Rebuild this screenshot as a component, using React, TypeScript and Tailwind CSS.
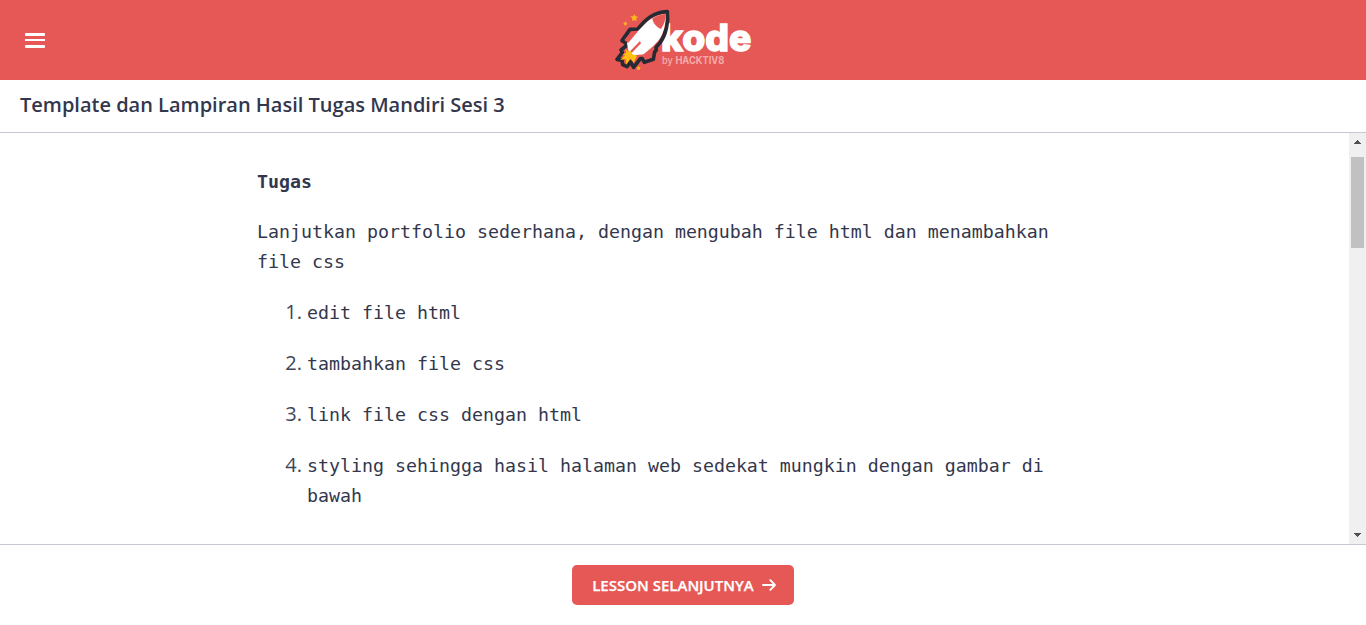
const steps = [
  'edit file html',
  'tambahkan file css',
  'link file css dengan html',
  'styling sehingga hasil halaman web sedekat mungkin dengan gambar di bawah',
];

function Logo() {
  return (
    <svg width="156" height="80" viewBox="0 0 468 240" role="img" aria-label="Kode by Hacktiv8">
      <text x="168" y="154" textLength="271" lengthAdjust="spacingAndGlyphs" fill="#fff" stroke="#fff" strokeWidth="4" className="font-['Inter'] text-[109px] font-extrabold">kode</text>
      <text x="171" y="193" textLength="187" lengthAdjust="spacingAndGlyphs" fill="#f3acab" className="font-['Inter'] text-[30px]">
        <tspan className="font-medium">by </tspan>
        <tspan className="font-bold">HACKTIV8</tspan>
      </text>
      <path d="M187 35C162 34 134 48 117 66L98 87L75 88L51 122L64 130L63 138L48 150L52 158L36 178L51 181L53 194L66 200L77 186L86 202L106 176L112 176L118 187L145 178L149 156L154 150L153 142L166 127C183 103 191 65 187 35Z" fill="#e65856" stroke="#262b33" strokeWidth="11" strokeLinejoin="round" />
      <path d="M181 41C155 45 132 58 117 75L94 98L66 129L70 152L84 166L122 163L141 142L159 123C175 104 184 71 181 41Z" fill="#fff" />
      <path d="M181 41C164 44 150 49 142 56C145 70 153 80 168 87C178 72 183 56 181 41Z" fill="#e65856" />
      <path d="M98 95L79 96L58 120L70 128ZM142 141L112 166L121 178L139 172Z" fill="#e65856" />
      <path d="M105 123L75 154L80 159L108 130Z" fill="#e65856" />
      <path d="M61 146L70 155L77 152L82 163L96 167L86 188L76 175L64 194L62 177L46 180L61 166L52 164L64 158Z" fill="#fec20e" />
      <path d="M88 41L91 49L99 50L93 56L95 64L88 60L81 63L82 55L76 49L85 49ZM61 63L63 68L68 69L64 72L65 77L61 74L57 77L58 72L54 69L59 68ZM101 197L103 202L108 203L104 206L105 211L100 208L96 211L97 205L93 202L99 202Z" fill="#fbb91b" />
    </svg>
  );
}

export default function App() {
  return (
    <div className="flex h-[625px] w-full flex-col overflow-hidden bg-white font-['Open_Sans',sans-serif] text-[#33374d]">
      <header className="grid h-20 shrink-0 grid-cols-[1fr_156px_1fr] items-center bg-[#e65856]">
        <button aria-label="Menu" className="ml-[25px] flex w-5 flex-col gap-[3px] pt-px">
          <span className="h-[3px] w-5 rounded-[1px] bg-white" />
          <span className="mb-px h-[2px] w-5 bg-white" />
          <span className="h-[3px] w-5 rounded-[1px] bg-white" />
        </button>
        <Logo />
      </header>
      <div className="flex h-[53px] shrink-0 items-center border-b border-[#c8c8d3] px-5 pb-[3px]">
        <h1 className="text-[20px] leading-[30px] font-semibold whitespace-nowrap">
          Template dan Lampiran Hasil Tugas Mandiri Sesi 3
        </h1>
      </div>
      <main className="flex h-[412px] shrink-0 border-b border-[#c8c8d3]">
        <div className="flex-1 overflow-hidden">
          <article className="ml-[257px] w-[835px] pt-[34px] font-['DejaVu_Sans_Mono',monospace] text-[18.27px] leading-[30px]">
            <p className="font-bold">Tugas</p>
            <p className="mt-5">
              Lanjutkan portfolio sederhana, dengan mengubah file html dan menambahkan<br />file css
            </p>
            <ol className="mt-[21px] flex flex-col gap-[21px]">
              {steps.map((step, i) => (
                <li key={step} className="flex">
                  <span className="-mt-px w-[50px] pr-[5px] text-right font-['Open_Sans',sans-serif] text-[20px] text-[#414558]">{i + 1}.</span>
                  <span className="w-[750px]">{step}</span>
                </li>
              ))}
            </ol>
          </article>
        </div>
        <div className="flex w-[17px] flex-col items-center bg-[#f0f0f0]">
          <svg width="17" height="24" viewBox="0 0 17 24" shapeRendering="crispEdges"><path d="M5 11L8.5 7L12 11Z" fill="#505050" /></svg>
          <div className="h-[91px] w-[13px] bg-[#c1c1c1]" />
          <svg className="mt-auto" width="17" height="17" viewBox="0 0 17 17" shapeRendering="crispEdges"><path d="M5 6L8.5 10L12 6Z" fill="#505050" /></svg>
        </div>
      </main>
      <footer className="flex flex-1 justify-center pt-5">
        <button className="flex h-10 w-[222px] items-center justify-center rounded-[5px] bg-[#e65856] pl-[2px] text-[15px] font-semibold whitespace-nowrap text-white [-webkit-text-stroke:0.25px_white]">
          <span>LESSON SELANJUTNYA</span>
          <svg className="ml-2" width="14" height="12" viewBox="0 0 14 12" fill="none" stroke="currentColor" strokeWidth="1.9" strokeLinecap="round" strokeLinejoin="round">
            <path d="M1 6H13M8.3 1.2L13 6L8.3 10.8" />
          </svg>
        </button>
      </footer>
    </div>
  );
}
